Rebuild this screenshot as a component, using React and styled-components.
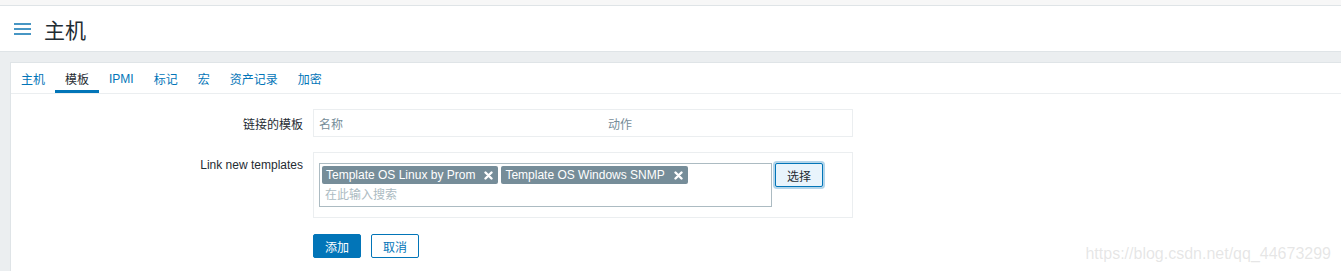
import React from 'react'
import styled, { createGlobalStyle } from 'styled-components'

const GlobalStyle = createGlobalStyle`
  html, body {
    margin: 0;
    padding: 0;
    background: #ebeef0;
    font-family: "Liberation Sans", Arial, "Noto Sans CJK SC", sans-serif;
    font-size: 12px;
    color: #1f2c33;
  }
`

const tabs = ['主机', '模板', 'IPMI', '标记', '宏', '资产记录', '加密']
const selected = ['Template OS Linux by Prom', 'Template OS Windows SNMP']

function MenuIcon() {
  return (
    <svg width="17" height="14" viewBox="0 0 17 14">
      <rect x="0" y="1" width="17" height="2" fill="#4796c4" />
      <rect x="0" y="6" width="17" height="2" fill="#4796c4" />
      <rect x="0" y="11" width="17" height="2" fill="#4796c4" />
    </svg>
  )
}

function RemoveIcon() {
  return (
    <svg width="9" height="9" viewBox="0 0 9 9">
      <path d="M1.5 1.5 L7.5 7.5 M7.5 1.5 L1.5 7.5" stroke="#fff" strokeWidth="2.4" strokeLinecap="round" />
    </svg>
  )
}

export default function App() {
  return (
    <Page>
      <GlobalStyle />
      <TopStrip />
      <Header>
        <MenuIcon />
        <Title>主机</Title>
      </Header>
      <Main>
        <Panel>
          <TabBar>
            {tabs.map((t) => (
              <Tab key={t} active={t === '模板'}>{t}</Tab>
            ))}
          </TabBar>
          <Form>
            <Label>链接的模板</Label>
            <Box>
              <TableHead>
                <HeadCell wide>名称</HeadCell>
                <HeadCell>动作</HeadCell>
              </TableHead>
            </Box>

            <Label>Link new templates</Label>
            <Box padded>
              <MultiRow>
                <MultiSelect>
                  <Tags>
                    {selected.map((s) => (
                      <Tag key={s}>
                        {s}
                        <RemoveIcon />
                      </Tag>
                    ))}
                  </Tags>
                  <SearchInput placeholder="在此输入搜索" />
                </MultiSelect>
                <SelectButton>选择</SelectButton>
              </MultiRow>
            </Box>

            <span />
            <Actions>
              <Button primary>添加</Button>
              <Button>取消</Button>
            </Actions>
          </Form>
        </Panel>
      </Main>
      <Watermark>https://blog.csdn.net/qq_44673299</Watermark>
    </Page>
  )
}

const Page = styled.div`
  position: relative;
  height: 271px;
  overflow: hidden;
`

const TopStrip = styled.div`
  height: 5px;
  background: #f7f7f7;
  border-bottom: 1px solid #dfe4e7;
`

const Header = styled.header`
  height: 45px;
  background: #fff;
  border-bottom: 1px solid #dfe4e7;
  display: flex;
  align-items: center;
  padding-left: 14px;
  gap: 13px;
`

const Title = styled.h1`
  margin: 0;
  font-size: 21px;
  font-weight: normal;
  color: #1f2c33;
`

const Main = styled.main`
  padding: 10px 0 0 10px;
`

const Panel = styled.div`
  background: #fff;
  border: 1px solid #dfe4e7;
  border-right: none;
  height: 220px;
`

const TabBar = styled.nav`
  display: flex;
  height: 30px;
  border-bottom: 1px solid #ebeef0;
`

const Tab = styled.a`
  display: flex;
  align-items: center;
  padding: 0 10px;
  font-size: 12px;
  color: ${(p) => (p.active ? '#1f2c33' : '#0275b8')};
  border-bottom: 3px solid ${(p) => (p.active ? '#0275b8' : 'transparent')};
  padding-top: 4px;
  cursor: pointer;
`

const Form = styled.div`
  display: grid;
  grid-template-columns: 292px 540px;
  column-gap: 10px;
  row-gap: 15px;
  padding-top: 15px;
`

const Label = styled.div`
  text-align: right;
  padding-top: 6px;
  color: #1f2c33;
`

const Box = styled.div`
  border: 1px solid #ebeef0;
  padding: ${(p) => (p.padded ? '10px 5px' : '0')};
`

const TableHead = styled.div`
  display: flex;
  height: 26px;
  align-items: center;
`

const HeadCell = styled.div`
  box-sizing: border-box;
  width: ${(p) => (p.wide ? '289px' : 'auto')};
  padding-left: 5px;
  color: #768d99;
`

const MultiRow = styled.div`
  display: flex;
  align-items: flex-start;
  gap: 3px;
`

const MultiSelect = styled.div`
  width: 447px;
  height: 38px;
  border: 1px solid #acbbc2;
  padding: 2px;
  box-sizing: content-box;
  display: flex;
  flex-direction: column;
`

const Tags = styled.div`
  display: flex;
  gap: 3px;
`

const Tag = styled.span`
  display: inline-flex;
  align-items: center;
  gap: 9px;
  height: 18px;
  padding: 0 5px 0 4px;
  background: #768d99;
  color: #fff;
  border-radius: 2px;
  font-size: 12px;
`

const SearchInput = styled.input`
  border: none;
  outline: none;
  padding: 0 0 0 3px;
  margin-top: 3px;
  height: 16px;
  font: inherit;
  font-size: 12px;
  color: #1f2c33;
  &::placeholder {
    color: #acbbc2;
  }
`

const SelectButton = styled.button`
  width: 48px;
  height: 24px;
  background: #e8f4fc;
  border: 1px solid #0275b8;
  border-radius: 2px;
  box-shadow: 0 0 0 2px rgba(2, 117, 184, 0.3);
  font: inherit;
  font-size: 12px;
  color: #1f2c33;
`

const Actions = styled.div`
  display: flex;
  gap: 10px;
  padding-top: 1px;
`

const Button = styled.button`
  width: 48px;
  height: 24px;
  border-radius: 2px;
  border: 1px solid #0275b8;
  background: ${(p) => (p.primary ? '#0275b8' : '#fff')};
  color: ${(p) => (p.primary ? '#fff' : '#0275b8')};
  font: inherit;
  font-size: 12px;
`

const Watermark = styled.div`
  position: absolute;
  right: 10px;
  bottom: 8px;
  font-family: "Liberation Sans", Arial, sans-serif;
  font-size: 16px;
  color: rgba(200, 200, 200, 0.45);
`
